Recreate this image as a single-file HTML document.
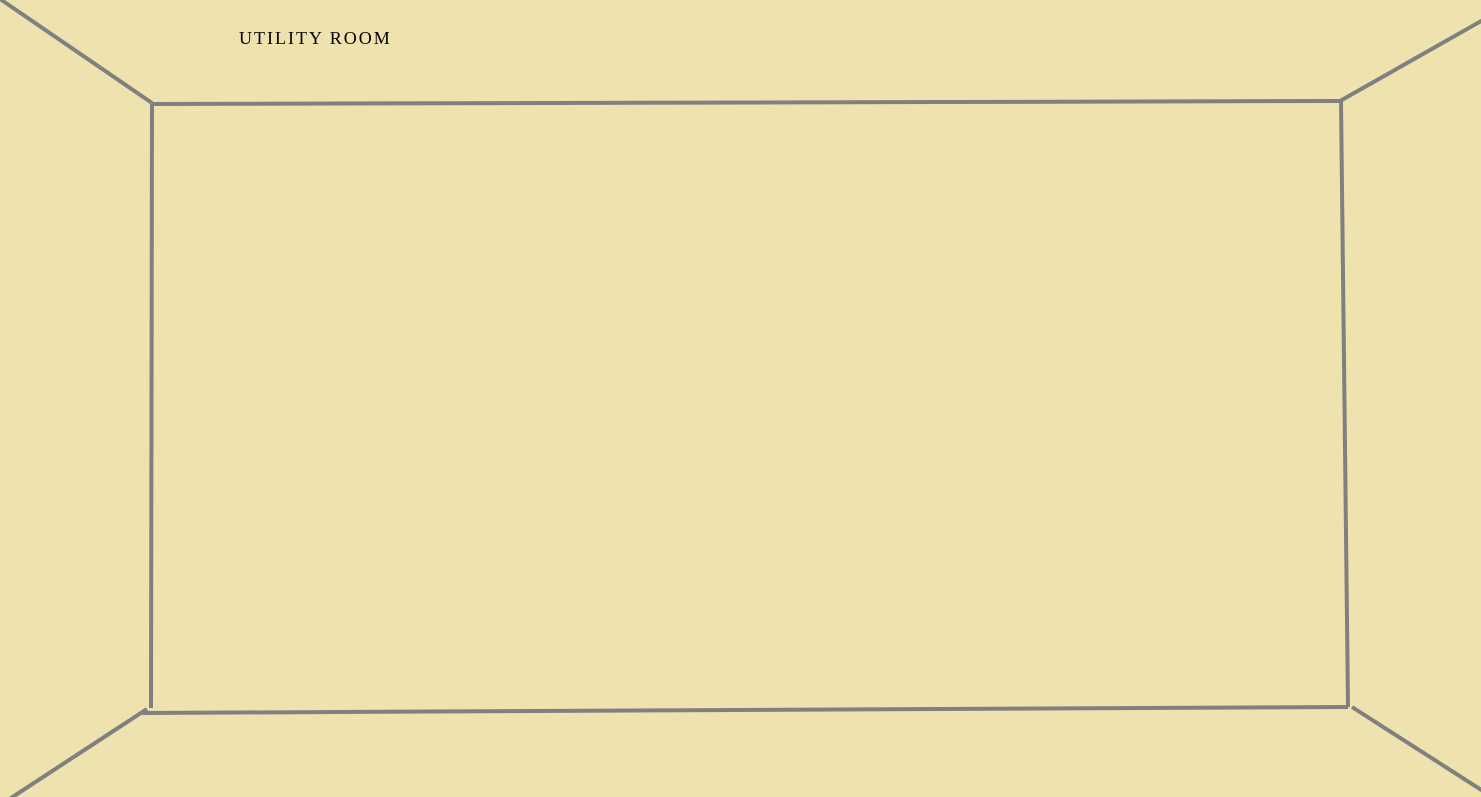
<!DOCTYPE html>
<html><head><style>
html,body{margin:0;padding:0;background:#EEE2AE;width:1481px;height:797px;overflow:hidden;}
.t{position:absolute;left:239px;top:28px;font-family:"Liberation Serif",serif;font-size:18px;letter-spacing:2px;color:#000;}
svg{position:absolute;left:0;top:0;}
</style></head><body>
<svg width="1481" height="797" stroke="#808080" stroke-width="4" fill="none">
<line x1="0" y1="-1" x2="152" y2="103"/>
<line x1="152" y1="104" x2="1341" y2="101"/>
<line x1="1341" y1="101" x2="1348" y2="707"/>
<line x1="1348" y1="707" x2="141" y2="713"/>
<line x1="152" y1="104" x2="151" y2="708"/>
<line x1="1340" y1="101" x2="1483" y2="20"/>
<line x1="1352" y1="707" x2="1483" y2="791"/>
<line x1="147" y1="709" x2="8" y2="800"/>
</svg>
<div class="t">UTILITY ROOM</div>
</body></html>
